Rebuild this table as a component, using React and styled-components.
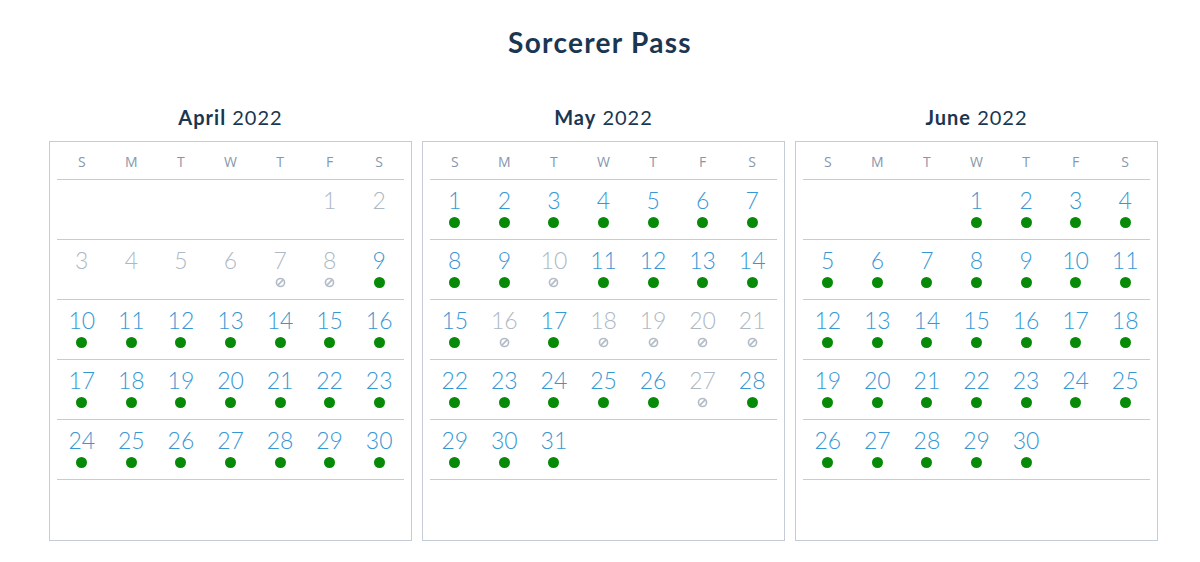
import React from "react";
import styled, { createGlobalStyle } from "styled-components";

const GlobalStyle = createGlobalStyle`
  html, body { margin: 0; padding: 0; background: #ffffff; }
  body { font-family: Lato, "Open Sans", "Liberation Sans", sans-serif; }
`;

const Page = styled.div`
  width: 1200px;
  height: 562px;
  box-sizing: border-box;
  padding-top: 24px;
`;

const Title = styled.h1`
  margin: 0;
  text-align: center;
  font-size: 28px;
  line-height: 36px;
  font-weight: 700;
  color: #1a3651;
  letter-spacing: 1.3px;
`;

const Months = styled.div`
  display: grid;
  grid-template-columns: repeat(3, 363px);
  column-gap: 10px;
  margin: 45px 0 0 49px;
`;

const MonthColumn = styled.section`
  display: flex;
  flex-direction: column;
`;

const MonthHeading = styled.h2`
  margin: 0 0 12px;
  text-align: center;
  font-size: 20px;
  line-height: 24px;
  color: #1a3651;
  font-weight: 400;
  letter-spacing: 1px;
  b { font-weight: 700; }
`;

const Box = styled.div`
  height: 400px;
  box-sizing: border-box;
  border: 1px solid #c3ccd7;
  padding: 0 7px;
`;

const Grid7 = styled.div`
  display: grid;
  grid-template-columns: repeat(7, 1fr);
`;

const HeaderRow = styled(Grid7)`
  height: 36px;
  align-items: center;
  border-bottom: 1px solid #c3ccd7;
  padding-top: 1px;
`;

const DayName = styled.div`
  text-align: center;
  font-size: 14px;
  color: #8797ab;
  font-family: "Open Sans", Lato, sans-serif;
`;

const WeekRow = styled(Grid7)`
  height: 60px;
  box-sizing: border-box;
  border-bottom: 1px solid #c3ccd7;
  padding-top: 7px;
`;

const DayCell = styled.div`
  display: flex;
  flex-direction: column;
  align-items: center;
`;

const DayNum = styled.div`
  font-size: 23px;
  line-height: 26px;
  font-weight: 300;
  color: ${(p) => (p.$muted ? "#aeb8c3" : "#3797d3")};
`;

const Dot = styled.div`
  width: 11px;
  height: 11px;
  border-radius: 50%;
  background: #078a07;
  margin-top: 4px;
`;

const BlockIcon = styled.svg`
  width: 11px;
  height: 11px;
  margin-top: 4px;
`;

const Blocked = () => (
  <BlockIcon viewBox="0 0 12 12">
    <circle cx="6" cy="6" r="4.4" fill="none" stroke="#b3bcc6" strokeWidth="1.8" />
    <line x1="3.2" y1="8.8" x2="8.8" y2="3.2" stroke="#b3bcc6" strokeWidth="1.8" />
  </BlockIcon>
);

const months = [
  { name: "April", start: 5, days: 30, past: 6, blocked: [7, 8] },
  { name: "May", start: 0, days: 31, past: 0, blocked: [10, 16, 18, 19, 20, 21, 27] },
  { name: "June", start: 3, days: 30, past: 0, blocked: [] },
];

const dayNames = ["S", "M", "T", "W", "T", "F", "S"];

function weeksOf(m) {
  const cells = [];
  for (let i = 0; i < m.start; i++) cells.push(null);
  for (let d = 1; d <= m.days; d++) cells.push(d);
  while (cells.length % 7) cells.push(null);
  const weeks = [];
  for (let i = 0; i < cells.length; i += 7) weeks.push(cells.slice(i, i + 7));
  return weeks;
}

function Day({ d, m }) {
  if (d == null) return <DayCell />;
  if (d <= m.past)
    return (
      <DayCell>
        <DayNum $muted>{d}</DayNum>
      </DayCell>
    );
  if (m.blocked.includes(d))
    return (
      <DayCell>
        <DayNum $muted>{d}</DayNum>
        <Blocked />
      </DayCell>
    );
  return (
    <DayCell>
      <DayNum>{d}</DayNum>
      <Dot />
    </DayCell>
  );
}

function Month({ m }) {
  return (
    <MonthColumn>
      <MonthHeading>
        <b>{m.name}</b> 2022
      </MonthHeading>
      <Box>
        <HeaderRow>
          {dayNames.map((n, i) => (
            <DayName key={i}>{n}</DayName>
          ))}
        </HeaderRow>
        {weeksOf(m).map((w, wi) => (
          <WeekRow key={wi}>
            {w.map((d, di) => (
              <Day key={di} d={d} m={m} />
            ))}
          </WeekRow>
        ))}
      </Box>
    </MonthColumn>
  );
}

export default function App() {
  return (
    <Page>
      <GlobalStyle />
      <Title>Sorcerer Pass</Title>
      <Months>
        {months.map((m) => (
          <Month key={m.name} m={m} />
        ))}
      </Months>
    </Page>
  );
}
